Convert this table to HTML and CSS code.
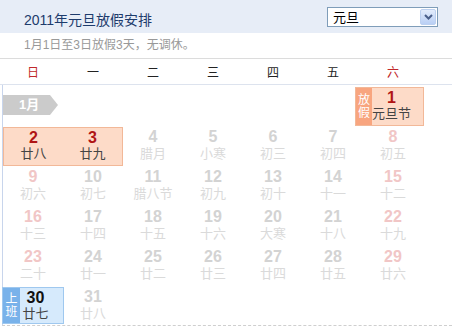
FILE: index.html
```html
<!DOCTYPE html>
<html lang="zh-CN">

<head>
    <meta charset="UTF-8">
    <title>2011年元旦放假安排</title>
    <link rel="stylesheet" href="styles.css">
</head>

<body>
    <div class="head">
        <h1 class="title">2011年元旦放假安排</h1>
        <div class="picker">
            <span>元旦</span>
            <span class="picker-btn">
                <svg width="9" height="6" viewBox="0 0 9 6"><path d="M1 1 L4.5 4.5 L8 1" fill="none" stroke="#4a5f8a" stroke-width="2"/></svg>
            </span>
        </div>
    </div>

    <p class="note">1月1日至3日放假3天，无调休。</p>

    <div class="weekdays">
        <span class="red">日</span><span>一</span><span>二</span><span>三</span><span>四</span><span>五</span><span class="red">六</span>
    </div>

    <div class="cal">
        <div class="grid">
            <!-- week 1 -->
            <div class="month-tag">1月</div>
            <div class="box holiday first">
                <span class="flag">放<br>假</span>
                <div class="day"><b>1</b><i>元旦节</i></div>
            </div>

            <!-- week 2 -->
            <div class="box rest">
                <div class="day"><b>2</b><i>廿八</i></div>
                <div class="day"><b>3</b><i>廿九</i></div>
            </div>
            <div class="day off"><b>4</b><i>腊月</i></div>
            <div class="day off"><b>5</b><i>小寒</i></div>
            <div class="day off"><b>6</b><i>初三</i></div>
            <div class="day off"><b>7</b><i>初四</i></div>
            <div class="day off wkend"><b>8</b><i>初五</i></div>

            <!-- week 3 -->
            <div class="day off wkend"><b>9</b><i>初六</i></div>
            <div class="day off"><b>10</b><i>初七</i></div>
            <div class="day off"><b>11</b><i>腊八节</i></div>
            <div class="day off"><b>12</b><i>初九</i></div>
            <div class="day off"><b>13</b><i>初十</i></div>
            <div class="day off"><b>14</b><i>十一</i></div>
            <div class="day off wkend"><b>15</b><i>十二</i></div>

            <!-- week 4 -->
            <div class="day off wkend"><b>16</b><i>十三</i></div>
            <div class="day off"><b>17</b><i>十四</i></div>
            <div class="day off"><b>18</b><i>十五</i></div>
            <div class="day off"><b>19</b><i>十六</i></div>
            <div class="day off"><b>20</b><i>大寒</i></div>
            <div class="day off"><b>21</b><i>十八</i></div>
            <div class="day off wkend"><b>22</b><i>十九</i></div>

            <!-- week 5 -->
            <div class="day off wkend"><b>23</b><i>二十</i></div>
            <div class="day off"><b>24</b><i>廿一</i></div>
            <div class="day off"><b>25</b><i>廿二</i></div>
            <div class="day off"><b>26</b><i>廿三</i></div>
            <div class="day off"><b>27</b><i>廿四</i></div>
            <div class="day off"><b>28</b><i>廿五</i></div>
            <div class="day off wkend"><b>29</b><i>廿六</i></div>

            <!-- week 6 -->
            <div class="box work">
                <span class="flag">上<br>班</span>
                <div class="day"><b>30</b><i>廿七</i></div>
            </div>
            <div class="day off"><b>31</b><i>廿八</i></div>
        </div>
    </div>
</body>

</html>
```

FILE: styles.css
```css
body {
    margin: 0;
    font-family: "Liberation Sans", "Noto Sans CJK SC", sans-serif;
    color: #222;
    background: #fff;
}

.head {
    height: 33px;
    background: #e7edf7;
    display: flex;
    align-items: center;
    justify-content: space-between;
    padding: 0 14px 0 24px;
}

.title {
    margin: 5px 0 0;
    font-size: 14px;
    font-weight: normal;
    color: #1d3b6c;
}

.picker {
    width: 111px;
    height: 20px;
    box-sizing: border-box;
    border: 1px solid #7f9db9;
    background: #fff;
    display: flex;
    align-items: center;
    justify-content: space-between;
    padding: 0 1px 0 5px;
    font-size: 13px;
    color: #000;
}

.picker-btn {
    width: 16px;
    height: 16px;
    box-sizing: border-box;
    border: 1px solid #bcd0f0;
    border-radius: 2px;
    background: linear-gradient(#e3ecfc, #b9cff5);
    display: flex;
    align-items: center;
    justify-content: center;
}

.note {
    margin: 0;
    height: 25px;
    line-height: 25px;
    padding-left: 24px;
    font-size: 12px;
    color: #999;
    border-bottom: 1px solid #dcdcdc;
}

.weekdays {
    display: grid;
    grid-template-columns: repeat(7, 60px);
    padding-left: 3px;
    height: 25px;
    align-items: center;
    justify-items: center;
    font-size: 12px;
    border-bottom: 1px solid #dde3ee;
}

.red {
    color: #c0282a;
}

.cal {
    margin-left: 2px;
    border-left: 1px solid #c8d5ec;
    border-bottom: 1px dashed #cfcfcf;
}

.grid {
    display: grid;
    grid-template-columns: repeat(7, 60px);
    grid-template-rows: 42px repeat(4, 40px) 38px;
}

.month-tag {
    grid-column: 1 / 7;
    justify-self: start;
    align-self: start;
    margin-top: 10px;
    width: 55px;
    height: 20px;
    box-sizing: border-box;
    padding-left: 16px;
    line-height: 20px;
    font-size: 13px;
    font-weight: bold;
    color: #fff;
    background: #cbcbcb;
    clip-path: polygon(0 0, 47px 0, 55px 50%, 47px 100%, 0 100%);
}

.day {
    display: flex;
    flex-direction: column;
    align-items: center;
}

.day b {
    font-size: 16px;
    line-height: 20px;
    color: #222;
}

.day i {
    font-style: normal;
    font-size: 13px;
    line-height: 14px;
    white-space: nowrap;
    color: #444;
}

/* days outside the holiday are faded out */
.off b {
    color: #d3d3d3;
}

.off i {
    color: #dadada;
}

.wkend b {
    color: #f1c6c6;
}

/* highlighted days */
.box {
    display: flex;
    margin-bottom: 1px;
    box-sizing: border-box;
    border: 1px solid;
}

.box .day {
    flex: 1;
}

.box .day b {
    line-height: 19px;
}

.flag {
    width: 17px;
    display: flex;
    align-items: center;
    justify-content: center;
    text-align: center;
    font-size: 12px;
    line-height: 13px;
    color: #fff;
}

.holiday,
.rest {
    background: #fddbc8;
    border-color: #f2b898;
}

.holiday .day b,
.rest .day b {
    color: #b01515;
}

.holiday .flag {
    background: #f8a57f;
}

.holiday.first {
    margin: 2px -1px 1px -8px;
}

.holiday.first .day {
    padding-right: 12px;
}

.rest {
    grid-column: span 2;
}

.work {
    margin: 0 -1px 1px -1px;
    background: #d6eafc;
    border-color: #9fc8ef;
}

.work .flag {
    background: #79b2ea;
}

.work .day {
    padding-right: 12px;
}

.work .day b {
    color: #111;
}
```
